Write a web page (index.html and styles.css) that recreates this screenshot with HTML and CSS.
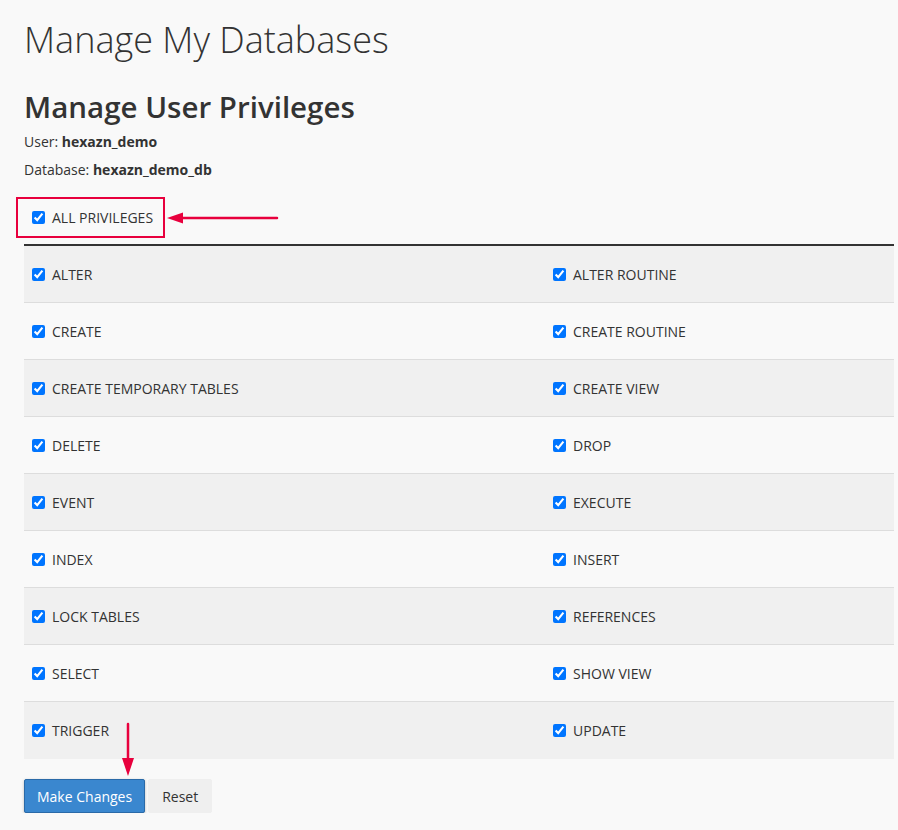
FILE: index.html
```html
<!DOCTYPE html>
<html lang="en">
<head>
  <meta charset="UTF-8" />
  <title>Manage My Databases</title>
  <link rel="stylesheet" href="styles.css">
</head>
<body>
  <div class="page">
    <h1>Manage My Databases</h1>
    <h2>Manage User Privileges</h2>
    <p class="meta">User: <strong>hexazn_demo</strong></p>
    <p class="meta">Database: <strong>hexazn_demo_db</strong></p>

    <form id="privForm">
      <div class="all-row">
        <label class="check all-box"><input type="checkbox" checked /> ALL PRIVILEGES</label>
        <!-- annotation arrow -->
        <svg class="arrow-left" width="112" height="12" viewBox="0 0 112 12">
          <line x1="14" y1="6" x2="110" y2="6" stroke="#e8003d" stroke-width="2.5" stroke-linecap="round"/>
          <polygon points="0,6 16,0.5 16,11.5" fill="#e8003d"/>
        </svg>
      </div>

      <div class="privs">
        <div class="row"><label class="check"><input type="checkbox" checked /> ALTER</label><label class="check"><input type="checkbox" checked /> ALTER ROUTINE</label></div>
        <div class="row"><label class="check"><input type="checkbox" checked /> CREATE</label><label class="check"><input type="checkbox" checked /> CREATE ROUTINE</label></div>
        <div class="row"><label class="check"><input type="checkbox" checked /> CREATE TEMPORARY TABLES</label><label class="check"><input type="checkbox" checked /> CREATE VIEW</label></div>
        <div class="row"><label class="check"><input type="checkbox" checked /> DELETE</label><label class="check"><input type="checkbox" checked /> DROP</label></div>
        <div class="row"><label class="check"><input type="checkbox" checked /> EVENT</label><label class="check"><input type="checkbox" checked /> EXECUTE</label></div>
        <div class="row"><label class="check"><input type="checkbox" checked /> INDEX</label><label class="check"><input type="checkbox" checked /> INSERT</label></div>
        <div class="row"><label class="check"><input type="checkbox" checked /> LOCK TABLES</label><label class="check"><input type="checkbox" checked /> REFERENCES</label></div>
        <div class="row"><label class="check"><input type="checkbox" checked /> SELECT</label><label class="check"><input type="checkbox" checked /> SHOW VIEW</label></div>
        <div class="row"><label class="check"><input type="checkbox" checked /> TRIGGER</label><label class="check"><input type="checkbox" checked /> UPDATE</label></div>
      </div>

      <div class="actions">
        <button type="submit" class="btn btn-primary">Make Changes</button>
        <button type="reset" class="btn btn-plain">Reset</button>
        <svg class="arrow-down" width="14" height="54" viewBox="0 0 14 54">
          <line x1="7" y1="2" x2="7" y2="40" stroke="#e8003d" stroke-width="2.5" stroke-linecap="round"/>
          <polygon points="7,54 1,36 13,36" fill="#e8003d"/>
        </svg>
      </div>
    </form>
  </div>
</body>
</html>
```

FILE: styles.css
```css
body {
  margin: 0;
  background-color: #f9f9f9;
  font-family: 'Open Sans', sans-serif;
  font-size: 14px;
  color: #333;
}

.page {
  padding: 0 4px 0 24px;
}

h1 {
  margin: 0;
  padding-top: 18px;
  font-size: 36px;
  font-weight: 300;
  line-height: 44px;
  color: #333;
}

h2 {
  margin: 26px 0 0;
  font-size: 29.5px;
  font-weight: 600;
  line-height: 38px;
  color: #333;
}

.meta {
  margin: 0;
  line-height: 28px;
}

.meta:first-of-type {
  margin-top: 2px;
}

.meta strong {
  font-weight: 700;
}

.check {
  display: flex;
  align-items: center;
  gap: 7px;
  cursor: pointer;
}

.check input {
  width: 13px;
  height: 13px;
  margin: 0;
}

.all-row {
  display: flex;
  align-items: center;
  margin-top: 13px;
  height: 41px;
}

.all-box {
  margin-left: -8px;
  height: 37px;
  padding: 0 10px 0 14px;
  border: 2px solid #e8003d;
}

.arrow-left {
  margin-left: 2px;
}

.privs {
  margin-top: 6px;
  border-top: 2px solid #333;
}

.row {
  display: grid;
  grid-template-columns: 521px 1fr;
  height: 56px;
  align-items: center;
  border-bottom: 1px solid #ddd;
}

.row:nth-child(odd) {
  background-color: #f0f0f0;
}

.row:last-child {
  border-bottom: none;
  height: 57px;
}

.row .check {
  padding-left: 8px;
}

.actions {
  position: relative;
  display: flex;
  gap: 3px;
  margin-top: 20px;
}

.btn {
  font-family: 'Open Sans', sans-serif;
  font-size: 14px;
  height: 34px;
  padding: 0 12px;
  border-radius: 2px;
  cursor: pointer;
}

.btn-primary {
  background-color: #3a87cf;
  color: #fff;
  border: 1px solid #2a6aa8;
  box-shadow: 0 1px 3px rgba(0, 0, 0, 0.25);
}

.btn-plain {
  background-color: #efefef;
  color: #333;
  border: 1px solid #efefef;
  padding: 0 13px;
}

.arrow-down {
  position: absolute;
  left: 97px;
  top: -57px;
}
```
